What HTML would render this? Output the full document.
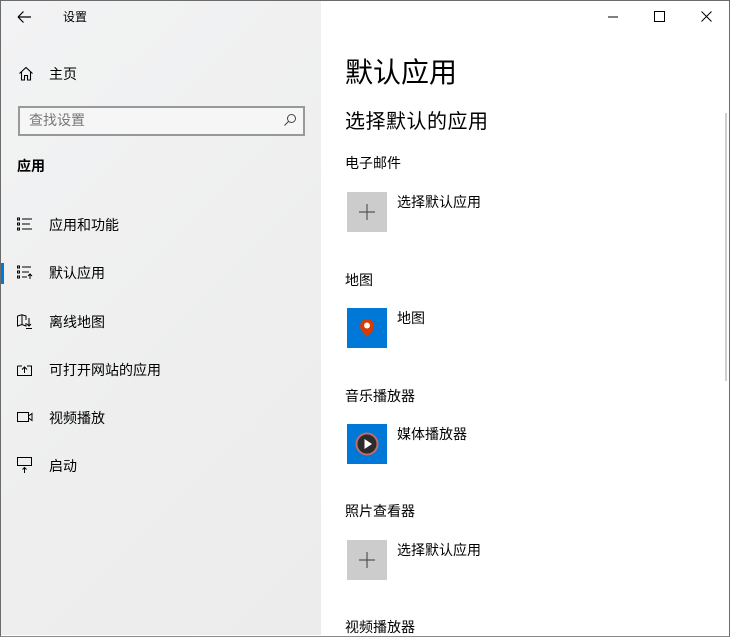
<!DOCTYPE html>
<html><head><meta charset="utf-8"><style>
*{margin:0;padding:0;box-sizing:border-box}
body{width:730px;height:637px;overflow:hidden;font-family:"Liberation Sans","Noto Sans CJK SC",sans-serif;color:#000;position:relative;background:#fff}
.win{position:absolute;left:0;top:0;width:730px;height:637px;border:1px solid #6b6b6b;border-bottom-color:#8a8a8a}
.side{position:absolute;left:1px;top:1px;width:320px;height:634px;background:linear-gradient(135deg,#f2f3f4,#eeeeee 60%,#ececec)}
.t{position:absolute;white-space:nowrap;line-height:1}
.nav{font-size:14px}
.ic{position:absolute}
.tile{position:absolute;left:347px;width:40px;height:40px}
.plus{background:#cccccc}
.blue{background:#0078d7}
</style></head><body>
<div class="side"></div>
<div class="win"></div>
<svg class="ic" style="left:17px;top:10px" width="16" height="14"><path d="M1 7H14M1 7L6.5 1.5M1 7L6.5 12.5" stroke="#000" stroke-width="1.2" fill="none"/></svg>
<div class="t" style="left:63px;top:11px;font-size:12px">设置</div>
<svg class="ic" style="left:18px;top:66px" width="16" height="15"><path d="M1.5 7.5L8 1.5L14.5 7.5M3.5 6V14H6.5V9.5H9.5V14H12.5V6" stroke="#000" stroke-width="1.1" fill="none"/></svg>
<div class="t nav" style="left:49px;top:67px">主页</div>
<div style="position:absolute;left:18px;top:106px;width:287px;height:30px;border:2px solid #999;background:#f6f6f6"></div>
<div class="t" style="left:29px;top:113px;font-size:14px;color:#777">查找设置</div>
<svg class="ic" style="left:283px;top:113px" width="14" height="14"><circle cx="8.5" cy="5.5" r="4" stroke="#444" stroke-width="1" fill="none"/><path d="M5.5 8.5L1.5 12.5" stroke="#444" stroke-width="1.1"/></svg>
<div class="t" style="left:17px;top:159px;font-size:14px;font-weight:bold">应用</div>
<svg class="ic" style="left:17px;top:217px" width="16" height="15"><g fill="none" stroke="#000" stroke-width="1"><rect x="0.5" y="1" width="2" height="2"/><rect x="0.5" y="6" width="2" height="2"/><rect x="0.5" y="11" width="2" height="2"/><path d="M5 2H15M5 7H13M5 12H15"/></g></svg>
<div class="t nav" style="left:49px;top:218px">应用和功能</div>
<div style="position:absolute;left:1px;top:263px;width:3px;height:21px;background:#0078d7"></div>
<svg class="ic" style="left:17px;top:265px" width="16" height="15"><g fill="none" stroke="#000" stroke-width="1"><rect x="0.5" y="1" width="2" height="2"/><rect x="0.5" y="6" width="2" height="2"/><rect x="0.5" y="11" width="2" height="2"/><path d="M5 2H14M5 7H12M5 12H10M13 14V9M11 11L13 9L15 11"/></g></svg>
<div class="t nav" style="left:49px;top:266px">默认应用</div>
<svg class="ic" style="left:17px;top:314px" width="17" height="16"><g fill="none" stroke="#000" stroke-width="1"><path d="M0.5 2V12L5 10.5L9 12V9M0.5 2L5 0.8L9 2V6M5 0.8V10.5M12 4V12M10 10L12 12L14 10M9 14.5H15"/></g></svg>
<div class="t nav" style="left:49px;top:315px">离线地图</div>
<svg class="ic" style="left:17px;top:362px" width="16" height="15"><g fill="none" stroke="#000" stroke-width="1"><path d="M0.5 4V13.5H14.5V4H10M5 4H0.5M7.5 11V5M5 7.5L7.5 5L10 7.5"/></g></svg>
<div class="t nav" style="left:49px;top:363px">可打开网站的应用</div>
<svg class="ic" style="left:17px;top:411px" width="16" height="12"><g fill="none" stroke="#000" stroke-width="1"><rect x="0.5" y="1.5" width="11" height="9"/><path d="M11.5 5L15 2.5V9.5L11.5 7"/></g></svg>
<div class="t nav" style="left:49px;top:411px">视频播放</div>
<svg class="ic" style="left:17px;top:457px" width="16" height="17"><g fill="none" stroke="#000" stroke-width="1"><path d="M0.5 0.5H14.5V8.5H0.5ZM7.5 16V10.5M5.5 12.5L7.5 10.5L9.5 12.5"/></g></svg>
<div class="t nav" style="left:49px;top:459px">启动</div>

<svg class="ic" style="left:608px;top:16px" width="10" height="2"><path d="M0 1H10" stroke="#000"/></svg>
<svg class="ic" style="left:654px;top:11px" width="11" height="11"><rect x="0.5" y="0.5" width="10" height="10" stroke="#000" fill="none"/></svg>
<svg class="ic" style="left:701px;top:11px" width="11" height="11"><path d="M0.5 0.5L10.5 10.5M10.5 0.5L0.5 10.5" stroke="#000"/></svg>
<div style="position:absolute;left:725px;top:113px;width:2px;height:268px;background:#cfcfcf"></div>

<div class="t" style="left:345px;top:59px;font-size:28px">默认应用</div>
<div class="t" style="left:345px;top:112px;font-size:20px;letter-spacing:0.5px">选择默认的应用</div>
<div class="t" style="left:345px;top:156px;font-size:14px">电子邮件</div>
<div class="tile plus" style="top:192px"></div>
<svg class="ic" style="left:358px;top:203px" width="18" height="18"><path d="M9 1V17M1 9H17" stroke="#555" stroke-width="1.2"/></svg>
<div class="t" style="left:397px;top:195px;font-size:14px">选择默认应用</div>
<div class="t" style="left:345px;top:273px;font-size:14px">地图</div>
<div class="tile blue" style="top:308px"></div>
<svg class="ic" style="left:356px;top:316px" width="22" height="24"><path d="M11 21L6 15.5Q4 13 4 10A7 7 0 0 1 18 10Q18 13 16 15.5Z" fill="#d83b01"/><circle cx="11" cy="9.5" r="3" fill="#fff"/></svg>
<div class="t" style="left:397px;top:311px;font-size:14px">地图</div>
<div class="t" style="left:345px;top:389px;font-size:14px">音乐播放器</div>
<div class="tile blue" style="top:424px"></div>
<svg class="ic" style="left:355px;top:432px" width="24" height="24"><circle cx="12" cy="12" r="10.5" fill="#2b2b2b" stroke="#c06a6a" stroke-width="2"/><path d="M9.5 7V17L17 12Z" fill="#fff"/></svg>
<div class="t" style="left:397px;top:427px;font-size:14px">媒体播放器</div>
<div class="t" style="left:345px;top:504px;font-size:14px">照片查看器</div>
<div class="tile plus" style="top:540px"></div>
<svg class="ic" style="left:358px;top:551px" width="18" height="18"><path d="M9 1V17M1 9H17" stroke="#555" stroke-width="1.2"/></svg>
<div class="t" style="left:397px;top:543px;font-size:14px">选择默认应用</div>
<div class="t" style="left:345px;top:620px;font-size:14px">视频播放器</div>
</body></html>
